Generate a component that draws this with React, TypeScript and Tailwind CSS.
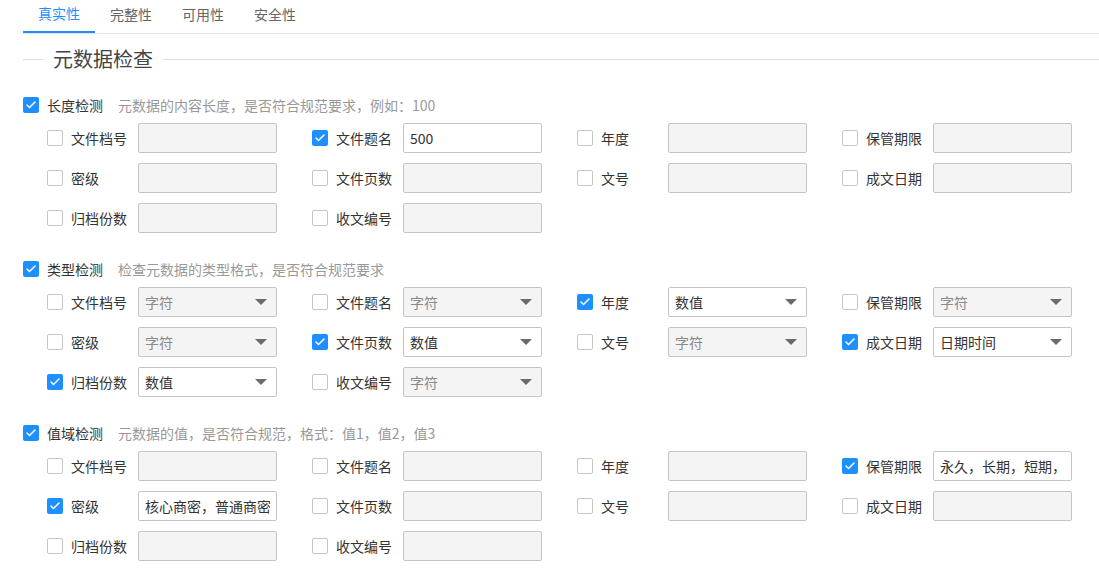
import { Check } from 'lucide-react'

type Field = { label: string; checked?: boolean; value?: string }
type Section = {
  title: string
  desc: string
  kind: 'input' | 'select'
  fields: Field[]
}

const sections: Section[] = [
  {
    title: '长度检测',
    desc: '元数据的内容长度，是否符合规范要求，例如：100',
    kind: 'input',
    fields: [
      { label: '文件档号' },
      { label: '文件题名', checked: true, value: '500' },
      { label: '年度' },
      { label: '保管期限' },
      { label: '密级' },
      { label: '文件页数' },
      { label: '文号' },
      { label: '成文日期' },
      { label: '归档份数' },
      { label: '收文编号' },
    ],
  },
  {
    title: '类型检测',
    desc: '检查元数据的类型格式，是否符合规范要求',
    kind: 'select',
    fields: [
      { label: '文件档号', value: '字符' },
      { label: '文件题名', value: '字符' },
      { label: '年度', checked: true, value: '数值' },
      { label: '保管期限', value: '字符' },
      { label: '密级', value: '字符' },
      { label: '文件页数', checked: true, value: '数值' },
      { label: '文号', value: '字符' },
      { label: '成文日期', checked: true, value: '日期时间' },
      { label: '归档份数', checked: true, value: '数值' },
      { label: '收文编号', value: '字符' },
    ],
  },
  {
    title: '值域检测',
    desc: '元数据的值，是否符合规范，格式：值1，值2，值3',
    kind: 'input',
    fields: [
      { label: '文件档号' },
      { label: '文件题名' },
      { label: '年度' },
      { label: '保管期限', checked: true, value: '永久，长期，短期，' },
      { label: '密级', checked: true, value: '核心商密，普通商密' },
      { label: '文件页数' },
      { label: '文号' },
      { label: '成文日期' },
      { label: '归档份数' },
      { label: '收文编号' },
    ],
  },
]

const tabs = ['真实性', '完整性', '可用性', '安全性']

function Box({ checked }: { checked?: boolean }) {
  return (
    <span
      className={
        checked
          ? 'flex h-4 w-4 shrink-0 items-center justify-center rounded-[2px] bg-[#1e8fff]'
          : 'flex h-4 w-4 shrink-0 items-center justify-center rounded-[2px] border border-[#c6c6c6] bg-white'
      }
    >
      {checked && <Check size={12} strokeWidth={3} className="text-white" />}
    </span>
  )
}

function FieldCell({ field, kind }: { field: Field; kind: Section['kind'] }) {
  const on = !!field.checked
  return (
    <div className="flex h-[30px] w-[265px] items-center">
      <Box checked={on} />
      <span className="ml-2 w-[67px] text-[14px] text-[#333]">{field.label}</span>
      {kind === 'input' ? (
        <input
          readOnly
          disabled={!on}
          defaultValue={field.value ?? ''}
          className="h-[30px] w-[139px] rounded-[2px] border border-[#c4c4c4] bg-white px-[6px] text-[14px] text-[#333] outline-none disabled:bg-[#f4f4f4]"
        />
      ) : (
        <div
          className={
            on
              ? 'flex h-[30px] w-[139px] items-center justify-between rounded-[2px] border border-[#c4c4c4] bg-white pl-[6px] pr-[9px] text-[14px] text-[#333]'
              : 'flex h-[30px] w-[139px] items-center justify-between rounded-[2px] border border-[#c4c4c4] bg-[#f4f4f4] pl-[6px] pr-[9px] text-[14px] text-[#8a8a8a]'
          }
        >
          <span className="pt-px">{field.value}</span>
          <span className="h-0 w-0 border-x-[6px] border-t-[6px] border-x-transparent border-t-[#6b6b6b]" />
        </div>
      )}
    </div>
  )
}

export default function App() {
  return (
    <div className="min-h-[573px] bg-white pl-[23px] font-['Microsoft_YaHei','Noto_Sans_CJK_SC',sans-serif] text-[#333]">
      {/* tabs */}
      <div className="flex h-[34px] border-b border-[#e6e6e6]">
        {tabs.map((t, i) => (
          <div
            key={t}
            className={
              i === 0
                ? 'flex w-[72px] items-center justify-center border-b-2 border-[#1e8fff] pb-[5px] text-[14px] text-[#1e8fff]'
                : 'flex w-[72px] items-center justify-center pb-[5px] text-[14px] text-[#666]'
            }
          >
            {t}
          </div>
        ))}
      </div>

      {/* legend */}
      <div className="mt-[11px] flex items-center">
        <span className="h-px w-5 bg-[#dcdcdc]" />
        <span className="px-[10px] text-[20px] leading-[28px] text-[#444]">元数据检查</span>
        <span className="h-px flex-1 bg-[#dcdcdc]" />
      </div>

      <div className="mt-[22px] flex flex-col gap-[26px]">
        {sections.map((s) => (
          <div key={s.title}>
            <div className="flex h-5 items-center">
              <Box checked />
              <span className="ml-2 text-[14px] text-[#333]">{s.title}</span>
              <span className="ml-[15px] text-[14px] text-[#999]">{s.desc}</span>
            </div>
            <div className="mt-2 grid grid-cols-[repeat(4,265px)] gap-y-[10px] pl-6">
              {s.fields.map((f) => (
                <FieldCell key={f.label} field={f} kind={s.kind} />
              ))}
            </div>
          </div>
        ))}
      </div>
    </div>
  )
}
